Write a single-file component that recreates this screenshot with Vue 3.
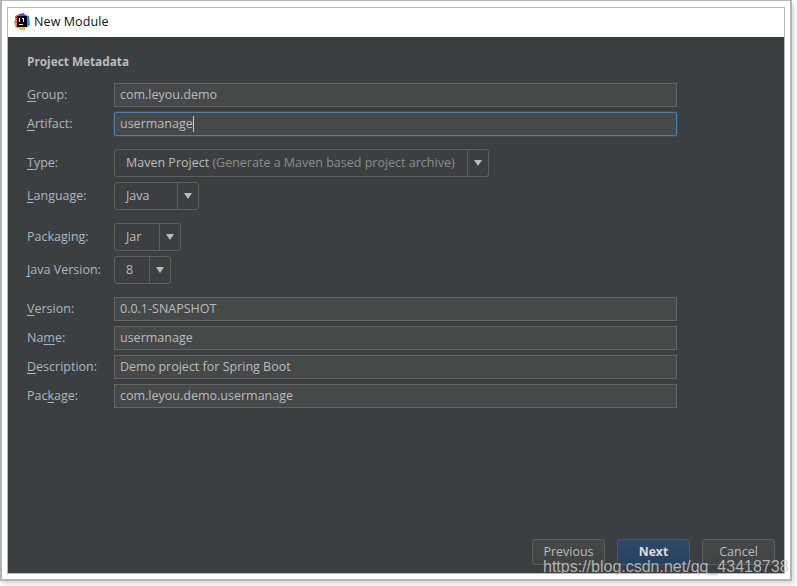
<script setup>
const topFields = [
  { before: '', key: 'G', after: 'roup:', value: 'com.leyou.demo' },
  { before: '', key: 'A', after: 'rtifact:', value: 'usermanage', focused: true }
]

const bottomFields = [
  { before: '', key: 'V', after: 'ersion:', value: '0.0.1-SNAPSHOT' },
  { before: 'Na', key: 'm', after: 'e:', value: 'usermanage' },
  { before: '', key: 'D', after: 'escription:', value: 'Demo project for Spring Boot' },
  { before: 'Pac', key: 'k', after: 'age:', value: 'com.leyou.demo.usermanage' }
]
</script>

<template>
  <div class="page">
    <div class="frame">
      <div class="dialog">
        <header class="titlebar">
          <svg class="logo" width="16" height="17" viewBox="0 0 16 17">
            <path d="M1 3 L6 1 L7 9 L2 12 Z" fill="#e8336a" />
            <path d="M0 8 L4 6 L6 14 L2 15 Z" fill="#f97a12" />
            <path d="M9 1 L15 3 L16 12 L12 15 Z" fill="#1f8ceb" />
            <path d="M5 1 L10 0 L12 5 L6 6 Z" fill="#7a3fd0" />
            <path d="M4 14 L12 13 L11 17 L6 17 Z" fill="#f4c21b" />
            <rect x="3" y="3" width="10" height="11" fill="#000" />
            <rect x="5" y="5" width="1" height="4" fill="#fff" />
            <rect x="8" y="5" width="2" height="1" fill="#fff" />
            <rect x="9" y="5" width="1" height="4" fill="#fff" />
            <rect x="5" y="11" width="4" height="1" fill="#fff" />
          </svg>
          <span class="title">New Module</span>
        </header>

        <main class="content">
          <div class="form">
            <h2 class="heading">Project Metadata</h2>

            <div class="group text-group">
              <div v-for="f in topFields" :key="f.key" class="row">
                <label>{{ f.before }}<u>{{ f.key }}</u>{{ f.after }}</label>
                <div class="input" :class="{ focused: f.focused }">
                  <span>{{ f.value }}</span><i v-if="f.focused" class="caret"></i>
                </div>
              </div>
            </div>

            <div class="group combo-group">
              <div class="row combo-row">
                <label><u>T</u>ype:</label>
                <div class="combo type">
                  <span class="combo-value">Maven Project <em>(Generate a Maven based project archive)</em></span>
                  <span class="arrow"></span>
                </div>
              </div>
              <div class="row combo-row">
                <label><u>L</u>anguage:</label>
                <div class="combo language">
                  <span class="combo-value">Java</span>
                  <span class="arrow"></span>
                </div>
              </div>
            </div>

            <div class="group combo-group">
              <div class="row combo-row">
                <label>Packa<u>g</u>ing:</label>
                <div class="combo packaging">
                  <span class="combo-value">Jar</span>
                  <span class="arrow"></span>
                </div>
              </div>
              <div class="row combo-row">
                <label><u>J</u>ava Version:</label>
                <div class="combo java">
                  <span class="combo-value">8</span>
                  <span class="arrow"></span>
                </div>
              </div>
            </div>

            <div class="group text-group">
              <div v-for="f in bottomFields" :key="f.key" class="row">
                <label>{{ f.before }}<u>{{ f.key }}</u>{{ f.after }}</label>
                <div class="input"><span>{{ f.value }}</span></div>
              </div>
            </div>
          </div>

          <footer class="buttons">
            <button class="btn">Previous</button>
            <button class="btn primary">Next</button>
            <button class="btn">Cancel</button>
          </footer>
        </main>
      </div>
    </div>
    <div class="watermark">https://blog.csdn.net/qq_43418738</div>
  </div>
</template>

<style>
html, body {
  margin: 0;
  background: #fff;
}
</style>

<style scoped>
.page {
  position: relative;
  width: 797px;
  height: 586px;
  overflow: hidden;
  background: #fff;
  font-family: "Open Sans", "Noto Sans", sans-serif;
  font-size: 12.5px;
}

.frame {
  box-sizing: border-box;
  width: 792px;
  height: 581px;
  padding: 6px 5px;
  border: 1px solid #b4b4b4;
  border-width: 1px 2px 2px 2px;
  background: #fff;
  box-shadow: 2px 3px 5px rgba(0, 0, 0, 0.16);
}

.dialog {
  box-sizing: border-box;
  display: flex;
  flex-direction: column;
  width: 778px;
  height: 567px;
  border: 1px solid #b9b9b9;
}

.titlebar {
  display: flex;
  align-items: center;
  flex: 0 0 29px;
  box-sizing: border-box;
  padding: 0 0 2px 6px;
  background: #fff;
}

.logo {
  margin-right: 4px;
}

.title {
  color: #111;
  letter-spacing: 0.1px;
}

.content {
  flex: 1;
  display: flex;
  flex-direction: column;
  justify-content: space-between;
  background: #3c3f41;
}

.form {
  padding: 15px 0 0 19px;
}

.heading {
  margin: 0 0 13px;
  color: #bbb;
  font-size: 11.8px;
  font-weight: 700;
  line-height: 18px;
}

.group {
  display: flex;
  flex-direction: column;
}

.text-group {
  gap: 5px;
  margin-bottom: 13px;
}

.combo-group {
  gap: 5px;
  margin-bottom: 13px;
}

.row {
  display: flex;
  align-items: center;
}

label {
  flex: 0 0 87px;
  color: #a9b7c0;
  line-height: 18px;
}

u {
  text-underline-offset: 2px;
}

.input {
  box-sizing: border-box;
  display: flex;
  align-items: center;
  width: 563px;
  height: 24px;
  padding: 0 0 1px 5px;
  border: 1px solid #646464;
  background: #45494a;
  color: #bbb;
}

.input.focused {
  border-color: #4c7fad;
  border-radius: 2px;
  box-shadow: 0 0 0 1px rgba(70, 110, 150, 0.3);
}

.caret {
  width: 1px;
  height: 16px;
  background: #ccc;
}

.combo {
  box-sizing: border-box;
  display: flex;
  align-items: center;
  height: 28px;
  border: 1px solid #5e6060;
  border-radius: 3px;
  color: #bbb;
}

.combo-value {
  flex: 1;
  padding: 0 0 1px 11px;
  white-space: nowrap;
}

.combo-value em {
  color: #8a8d8f;
  font-style: normal;
}

.arrow {
  position: relative;
  flex: 0 0 20px;
  height: 100%;
  border-left: 1px solid #5e6060;
}

.arrow::after {
  content: "";
  position: absolute;
  left: 6px;
  top: 10px;
  border-style: solid;
  border-width: 6px 4px 0;
  border-color: #bbb transparent transparent;
}

.type { width: 375px; }
.language { width: 85px; }
.packaging { width: 67px; }
.java { width: 57px; }

.buttons {
  display: flex;
  justify-content: flex-end;
  gap: 12px;
  padding: 0 9px 8px 0;
}

.btn {
  box-sizing: border-box;
  width: 73px;
  height: 26px;
  padding: 0 0 2px;
  border: 1px solid #5e6060;
  border-radius: 3px;
  background: linear-gradient(#45494a, #404344);
  color: #bbb;
  font-family: inherit;
  font-size: 12.5px;
}

.btn.primary {
  border-color: #3e5a78;
  background: linear-gradient(#2f4a6c, #28405f);
  color: #ddd;
  font-size: 12.2px;
  font-weight: 700;
}

/* csdn watermark sits on top of the dialog */
.watermark {
  position: absolute;
  left: 543px;
  top: 557px;
  color: rgba(205, 205, 205, 0.82);
  font-family: "Liberation Sans", Arial, sans-serif;
  font-size: 16px;
  line-height: 20px;
  white-space: nowrap;
}
</style>
